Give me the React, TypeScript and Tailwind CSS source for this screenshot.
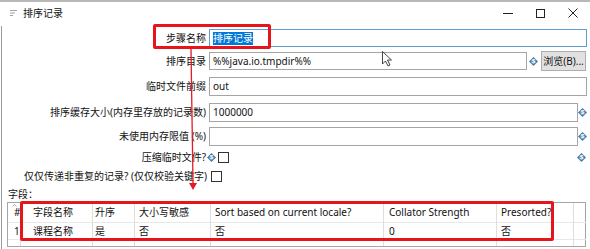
import React from 'react';

const VarIcon: React.FC = () => (
  <svg width="9" height="9" viewBox="0 0 9 9" className="shrink-0">
    <polygon points="4.5,0 9,4.5 4.5,9 0,4.5" fill="#4a7ba3" />
    <circle cx="4.5" cy="4.5" r="2.6" fill="#6f9dc2" />
    <text x="4.5" y="6.4" textAnchor="middle" fontSize="5.5" fill="#fff" fontFamily="Liberation Sans, sans-serif" fontWeight="bold">$</text>
  </svg>
);

const Checkbox: React.FC = () => (
  <div className="w-[11px] h-[11px] border border-[#333] bg-white shrink-0" />
);

const labelCls = 'w-[204px] shrink-0 text-right';

const cols = [
  { w: 'w-[13px]', pl: 'pl-[6px]', head: '#', val: '1' },
  { w: 'w-[72px]', pl: 'pl-[12px]', head: '字段名称', val: '课程名称' },
  { w: 'w-[42px]', pl: 'pl-[2px]', head: '升序', val: '是' },
  { w: 'w-[76px]', pl: 'pl-[4px]', head: '大小写敏感', val: '否' },
  { w: 'w-[173px]', pl: 'pl-[4px]', head: 'Sort based on current locale?', val: '否' },
  { w: 'w-[113px]', pl: 'pl-[5px]', head: 'Collator Strength', val: '0' },
  { w: 'w-[77px]', pl: 'pl-[4px]', head: 'Presorted?', val: '否' },
  { w: 'w-[12px]', pl: '', head: '', val: '' },
];

export default function App() {
  return (
    <div
      className="relative w-[590px] h-[249px] bg-white overflow-hidden text-[10px] text-[#111]"
      style={{ fontFamily: '"Noto Sans", "Noto Sans CJK SC", sans-serif' }}
    >
      {/* title bar */}
      <div className="h-[24px] flex items-center border-t-2 border-[#b8b8b8]">
        <svg width="7" height="6" viewBox="0 0 7 6" className="ml-[10px] mr-[6px]">
          <rect x="0" y="0" width="7" height="1" fill="#9aa5b0" />
          <rect x="0" y="2.5" width="5" height="1" fill="#9aa5b0" />
          <rect x="0" y="5" width="3" height="1" fill="#9aa5b0" />
        </svg>
        <span className="text-[10px]">排序记录</span>
        <div className="ml-auto flex items-center">
          <div className="w-[10px] h-px bg-[#222] mr-[23px]" />
          <div className="w-[9px] h-[9px] border border-[#222] mr-[23px]" />
          <svg width="10" height="10" viewBox="0 0 10 10" className="mr-[12px]">
            <path d="M0.5 0.5 L9.5 9.5 M9.5 0.5 L0.5 9.5" stroke="#222" strokeWidth="1" />
          </svg>
        </div>
      </div>

      <div className="border-l border-[#9c9c9c] h-[225px] ml-px">
        {/* 步骤名称 */}
        <div className="flex items-center h-[24px] mt-[2px]">
          <div className={labelCls}>步骤名称</div>
          <div className="ml-[3px] w-[378px] h-[18px] border border-[#5aa0d6] flex items-center pl-[3px]">
            <span className="bg-[#0078d7] text-white leading-[13px]">排序记录</span>
          </div>
        </div>
        {/* 排序目录 */}
        <div className="flex items-center h-[22px]">
          <div className={labelCls}>排序目录</div>
          <div className="ml-[3px] w-[318px] h-[18px] border border-[#a5a5a5] flex items-center pl-[3px]">
            %%java.io.tmpdir%%
          </div>
          <div className="ml-[2px] w-[9px] flex justify-center">
            <VarIcon />
          </div>
          <div className="ml-[3px] w-[45px] h-[20px] bg-[#e1e1e1] border border-[#adadad] flex items-center justify-center text-[10px]">
            浏览(B)...
          </div>
        </div>
        {/* 临时文件前缀 */}
        <div className="flex items-center h-[28px]">
          <div className={labelCls}>临时文件前缀</div>
          <div className="ml-[3px] w-[378px] h-[19px] border border-[#a5a5a5] flex items-center pl-[3px]">
            out
          </div>
        </div>
        {/* 排序缓存大小 */}
        <div className="flex items-center h-[24px]">
          <div className={labelCls}>排序缓存大小(内存里存放的记录数)</div>
          <div className="ml-[3px] w-[369px] h-[19px] border border-[#a5a5a5] flex items-center pl-[3px]">
            1000000
          </div>
          <div className="w-[9px] flex justify-center">
            <VarIcon />
          </div>
        </div>
        {/* 未使用内存限值 */}
        <div className="flex items-center h-[24px]">
          <div className={labelCls}>未使用内存限值 (%)</div>
          <div className="ml-[3px] w-[369px] h-[19px] border border-[#a5a5a5]" />
          <div className="w-[9px] flex justify-center">
            <VarIcon />
          </div>
        </div>
        {/* 压缩临时文件 */}
        <div className="flex items-center h-[19px]">
          <div className={labelCls}>压缩临时文件?</div>
          <div className="ml-[1px] mr-[2px]">
            <VarIcon />
          </div>
          <Checkbox />
          <div className="ml-auto mr-[4px]">
            <VarIcon />
          </div>
        </div>
        {/* 仅仅传递非重复的记录 */}
        <div className="flex items-center h-[19px]">
          <div className="w-[205px] shrink-0 text-right">仅仅传递非重复的记录? (仅仅校验关键字)</div>
          <div className="ml-[4px]">
            <Checkbox />
          </div>
        </div>
        {/* 字段 */}
        <div className="flex items-center h-[16px] pl-[6px]">字段：</div>

        {/* table */}
        <div className="ml-[5px] w-[579px] h-[45px] border border-[#a5a5a5] flex">
          {cols.map((c, i) => (
            <div key={i} className={`${c.w} shrink-0 flex flex-col ${i < cols.length - 1 ? 'border-r border-[#dedede]' : ''}`}>
              <div className={`relative h-[20px] flex items-center ${c.pl} border-b border-[#e8e8e8] whitespace-nowrap`}>
                {i === 0 && (
                  <svg width="5" height="3" viewBox="0 0 5 3" className="absolute left-[4px] top-[1px]">
                    <path d="M0.5 2.5 L2.5 0.5 L4.5 2.5" stroke="#999" strokeWidth="0.8" fill="none" />
                  </svg>
                )}
                {c.head}
              </div>
              <div className={`h-[17px] flex items-center ${c.pl} border-b border-[#e8e8e8] whitespace-nowrap`}>
                {c.val}
              </div>
            </div>
          ))}
        </div>
      </div>

      {/* red annotations */}
      <div className="absolute left-[153px] top-[24px] w-[118px] h-[25px] border-[3px] border-[#e8141c] rounded-[2px] pointer-events-none" />
      <div className="absolute left-[20px] top-[201px] w-[534px] h-[40px] border-[3px] border-[#e8141c] rounded-[2px] pointer-events-none" />
      <svg className="absolute left-0 top-0 pointer-events-none" width="590" height="249" viewBox="0 0 590 249">
        <line x1="191" y1="49" x2="193" y2="184" stroke="#e31b23" strokeWidth="1.3" />
        <polygon points="189,183 197,183 193,190" fill="#e31b23" />
        {/* mouse pointer */}
        <path d="M382.5 51.5 L382.5 64 L385.5 61 L388 66 L390 65 L387.5 60 L391.5 60 Z" fill="#fff" stroke="#333" strokeWidth="0.9" strokeLinejoin="round" />
      </svg>
    </div>
  );
}
